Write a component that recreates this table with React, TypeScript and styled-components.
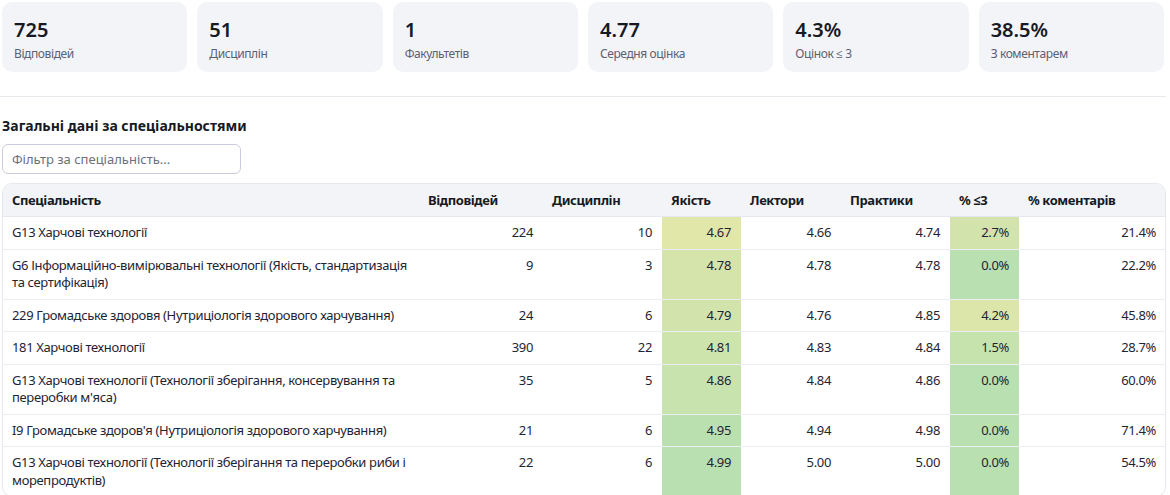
import { createGlobalStyle } from "styled-components";
import styled from "styled-components";

const GlobalStyle = createGlobalStyle`
    body {
        margin: 0;
        background: #fff;
        font-family: "Noto Sans", "Open Sans", Arial, sans-serif;
        color: #1f2433;
    }
`;

const Page = styled.div`
    width: 1166px;
    padding-top: 2px;
`;

const StatsRow = styled.div`
    display: grid;
    grid-template-columns: repeat(6, 1fr);
    gap: 10px;
    padding: 0 2px;
    margin-bottom: 24px;
`;

const StatCard = styled.div`
    background: #f3f4f8;
    border-radius: 10px;
    height: 70px;
    box-sizing: border-box;
    padding: 16px 12px 0 12px;
`;

const StatValue = styled.div`
    font-size: 20px;
    font-weight: 600;
    line-height: 24px;
    color: #161a24;
`;

const StatLabel = styled.div`
    font-size: 12px;
    line-height: 16px;
    margin-top: 4px;
    letter-spacing: -0.4px;
    color: #5b6172;
`;

const Divider = styled.hr`
    border: none;
    border-top: 1px solid #e8e9ee;
    margin: 0 0 20px 0;
`;

const SectionTitle = styled.h3`
    font-size: 14px;
    font-weight: 700;
    line-height: 18px;
    margin: 0 0 9px 2px;
    color: #161a24;
`;

const FilterInput = styled.input`
    display: block;
    width: 239px;
    height: 30px;
    box-sizing: border-box;
    margin: 0 0 9px 2px;
    padding: 0 9px;
    border: 1px solid #c9ccdc;
    border-radius: 6px;
    font-family: inherit;
    font-size: 13px;
    color: #1f2433;
    &::placeholder {
        color: #6b7080;
    }
`;

const TableWrap = styled.div`
    margin-left: 2px;
    border: 1px solid #e6e8ef;
    border-radius: 10px;
    overflow: hidden;
`;

const Table = styled.table`
    width: 100%;
    border-collapse: collapse;
    table-layout: fixed;
    font-size: 13px;
`;

const HeadCell = styled.th`
    background: #f3f4f8;
    text-align: left;
    font-weight: 700;
    padding: 8px 8px 8px 9px;
    line-height: 16px;
    letter-spacing: -0.4px;
    color: #161a24;
    border-bottom: 1px solid #e6e8ef;
`;

const Row = styled.tr`
    & + & td {
        border-top: 1px solid #ebedf2;
    }
`;

const Cell = styled.td<{ $num?: boolean; $bg?: string }>`
    padding: 7px 10px 7px 9px;
    line-height: 17.5px;
    letter-spacing: -0.35px;
    vertical-align: top;
    text-align: ${(p) => (p.$num ? "right" : "left")};
    background: ${(p) => p.$bg ?? "transparent"};
    color: #1f2433;
`;

const stats = [
    { value: "725", label: "Відповідей" },
    { value: "51", label: "Дисциплін" },
    { value: "1", label: "Факультетів" },
    { value: "4.77", label: "Середня оцінка" },
    { value: "4.3%", label: "Оцінок ≤ 3" },
    { value: "38.5%", label: "З коментарем" },
];

const columns = [
    { title: "Спеціальність", width: 416 },
    { title: "Відповідей", width: 124 },
    { title: "Дисциплін", width: 119 },
    { title: "Якість", width: 79 },
    { title: "Лектори", width: 100 },
    { title: "Практики", width: 109 },
    { title: "% ≤3", width: 69 },
    { title: "% коментарів", width: 147 },
];

type Spec = {
    name: string;
    answers: number;
    disciplines: number;
    quality: string;
    qualityBg: string;
    lecturers: string;
    practice: string;
    low: string;
    lowBg: string;
    comments: string;
};

const rows: Spec[] = [
    { name: "G13 Харчові технології", answers: 224, disciplines: 10, quality: "4.67", qualityBg: "#e1e6a9", lecturers: "4.66", practice: "4.74", low: "2.7%", lowBg: "#d2e4ab", comments: "21.4%" },
    { name: "G6 Інформаційно-вимірювальні технології (Якість, стандартизація та сертифікація)", answers: 9, disciplines: 3, quality: "4.78", qualityBg: "#d5e4ab", lecturers: "4.78", practice: "4.78", low: "0.0%", lowBg: "#b8e0b0", comments: "22.2%" },
    { name: "229 Громадське здоровя (Нутриціологія здорового харчування)", answers: 24, disciplines: 6, quality: "4.79", qualityBg: "#d2e4ab", lecturers: "4.76", practice: "4.85", low: "4.2%", lowBg: "#dce6ab", comments: "45.8%" },
    { name: "181 Харчові технології", answers: 390, disciplines: 22, quality: "4.81", qualityBg: "#cee4ad", lecturers: "4.83", practice: "4.84", low: "1.5%", lowBg: "#c6e3ae", comments: "28.7%" },
    { name: "G13 Харчові технології (Технології зберігання, консервування та переробки м'яса)", answers: 35, disciplines: 5, quality: "4.86", qualityBg: "#c9e3ae", lecturers: "4.84", practice: "4.86", low: "0.0%", lowBg: "#b8e0b0", comments: "60.0%" },
    { name: "I9 Громадське здоров'я (Нутриціологія здорового харчування)", answers: 21, disciplines: 6, quality: "4.95", qualityBg: "#bbe0b0", lecturers: "4.94", practice: "4.98", low: "0.0%", lowBg: "#b8e0b0", comments: "71.4%" },
    { name: "G13 Харчові технології (Технології зберігання та переробки риби і морепродуктів)", answers: 22, disciplines: 6, quality: "4.99", qualityBg: "#b8e0b0", lecturers: "5.00", practice: "5.00", low: "0.0%", lowBg: "#b8e0b0", comments: "54.5%" },
];

const App = () => {
    return (
        <Page>
            <GlobalStyle />
            <StatsRow>
                {stats.map((s) => (
                    <StatCard key={s.label}>
                        <StatValue>{s.value}</StatValue>
                        <StatLabel>{s.label}</StatLabel>
                    </StatCard>
                ))}
            </StatsRow>
            <Divider />
            <SectionTitle>Загальні дані за спеціальностями</SectionTitle>
            <FilterInput placeholder="Фільтр за спеціальність..." />
            <TableWrap>
                <Table>
                    <colgroup>
                        {columns.map((c) => (
                            <col key={c.title} style={{ width: c.width }} />
                        ))}
                    </colgroup>
                    <thead>
                        <tr>
                            {columns.map((c) => (
                                <HeadCell key={c.title}>{c.title}</HeadCell>
                            ))}
                        </tr>
                    </thead>
                    <tbody>
                        {rows.map((r) => (
                            <Row key={r.name}>
                                <Cell>{r.name}</Cell>
                                <Cell $num>{r.answers}</Cell>
                                <Cell $num>{r.disciplines}</Cell>
                                <Cell $num $bg={r.qualityBg}>{r.quality}</Cell>
                                <Cell $num>{r.lecturers}</Cell>
                                <Cell $num>{r.practice}</Cell>
                                <Cell $num $bg={r.lowBg}>{r.low}</Cell>
                                <Cell $num>{r.comments}</Cell>
                            </Row>
                        ))}
                    </tbody>
                </Table>
            </TableWrap>
        </Page>
    );
};

export default App;
